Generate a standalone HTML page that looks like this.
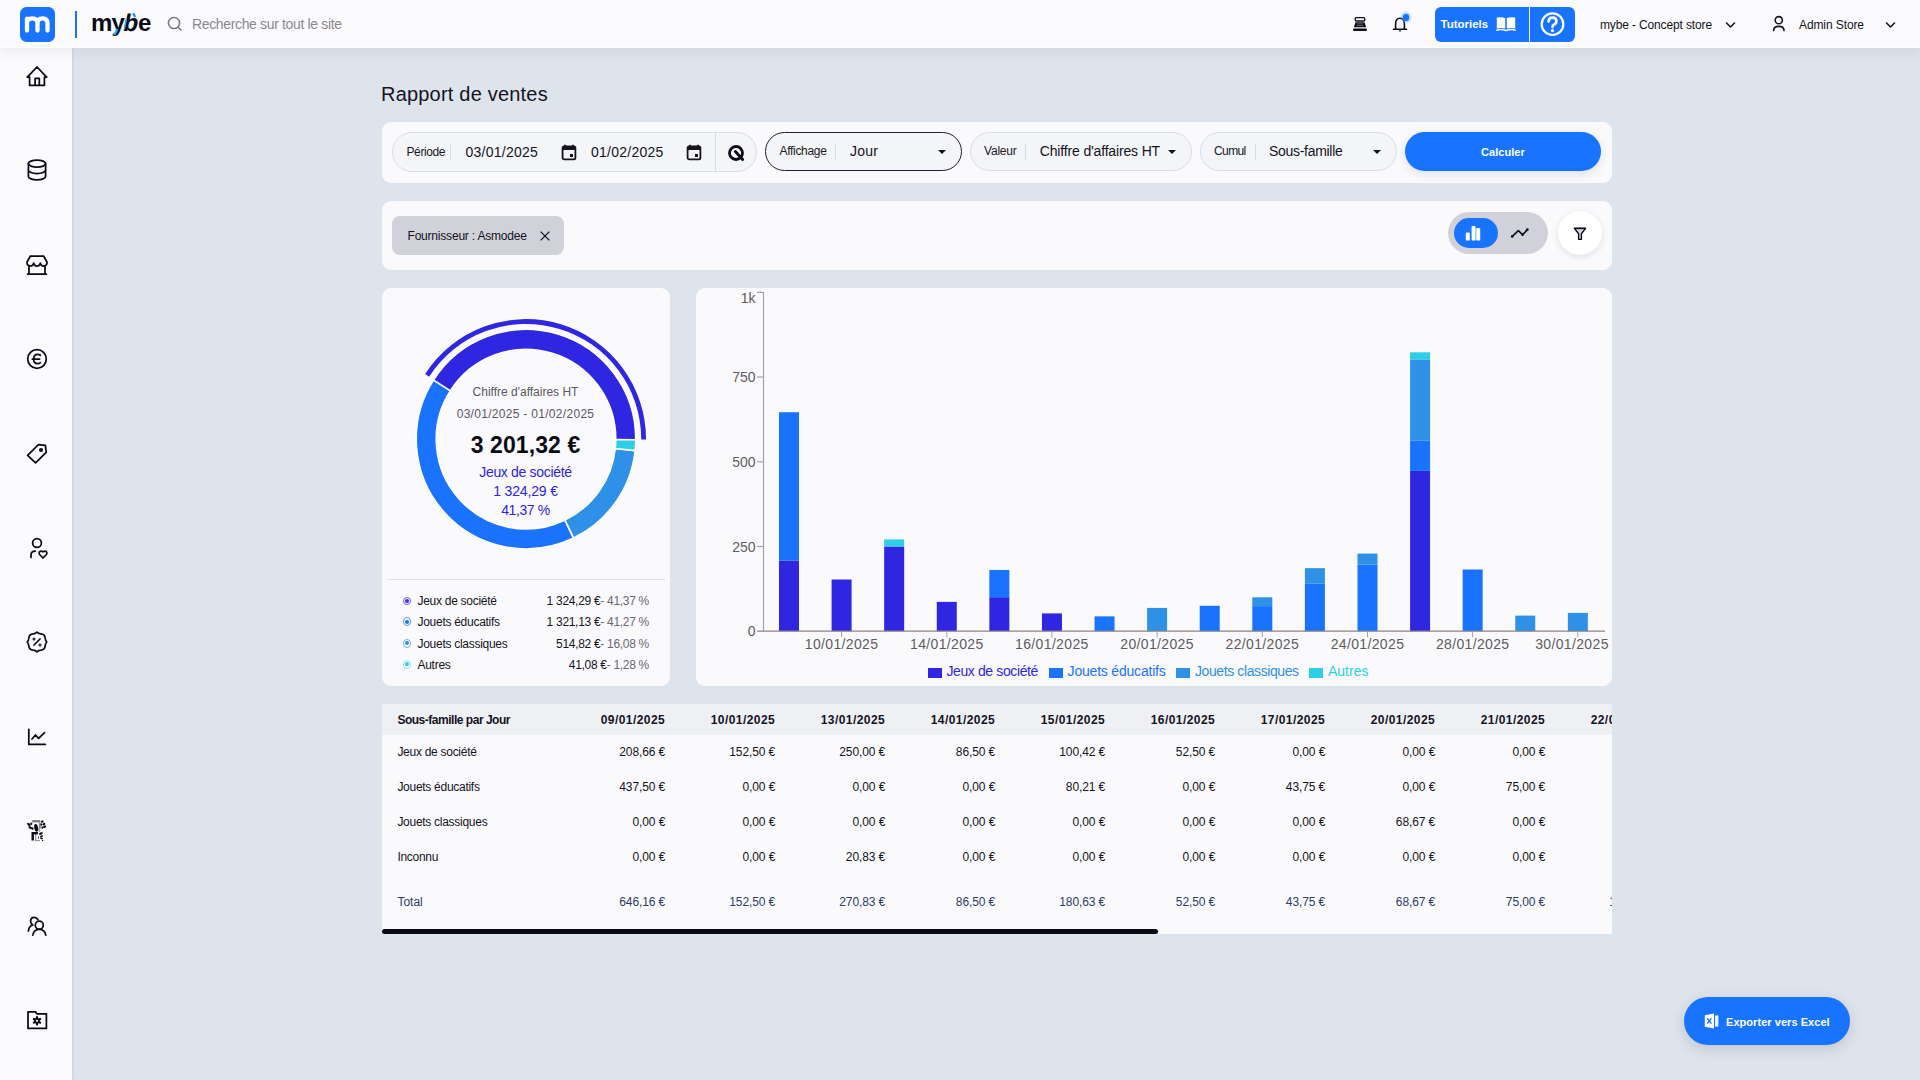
<!DOCTYPE html>
<html><head><meta charset="utf-8">
<style>
*{box-sizing:border-box;margin:0;padding:0}
html,body{width:1920px;height:1080px;overflow:hidden}
body{font-family:"Liberation Sans",sans-serif;background:#dee4eb;color:#15131f;position:relative;line-height:1}
.a{position:absolute}
.t{position:absolute;white-space:nowrap;line-height:1}
#hdr{position:absolute;left:0;top:0;width:1920px;height:48px;background:#fbfbfd;border-bottom:1px solid #fff;box-shadow:0 3px 12px rgba(20,30,50,.07);z-index:3}
#side{position:absolute;left:0;top:48px;width:72px;height:1032px;background:#fbfbfd;box-shadow:1px 0 2px rgba(30,40,60,.10);z-index:2}
.card{position:absolute;background:#fafafd;border-radius:9px}
svg{position:absolute;overflow:visible}
.ic path,.ic circle,.ic ellipse,.ic polyline,.ic rect{fill:none;stroke:#0c0a17;stroke-width:1.75;stroke-linecap:round;stroke-linejoin:round}
.pill{position:absolute;top:132px;height:40px;border:1px solid #d8dee6;border-radius:20px;background:#f3f5f8}
.plbl{font-size:12px;color:#1a1826;letter-spacing:-0.4px}
.pval{font-size:14px;color:#15131f}
.div{position:absolute;width:1px;background:#d6dbe2}
.caret{position:absolute;width:0;height:0;border-left:4.5px solid transparent;border-right:4.5px solid transparent;border-top:4.5px solid #15131f}
</style></head><body>
<div id="hdr">
  <!-- logo -->
  <div class="a" style="left:20px;top:7px;width:35px;height:35px;background:#1874ff;border-radius:6.5px"></div>
  <svg style="left:20px;top:7px" width="35" height="35" viewBox="0 0 35 35"><path d="M7 23.6 V11.6 M7 16.2 Q7 11.3 12.25 11.3 Q17.5 11.3 17.5 16.2 V23.6 M17.5 16.2 Q17.5 11.3 22.5 11.3 Q27.5 11.3 27.5 16.2 V23.6" fill="none" stroke="#fff" stroke-width="4.3" stroke-linecap="round"/></svg>
  <div class="a" style="left:75px;top:11px;width:1.5px;height:27px;background:#1874ff"></div>
  <div class="t" style="left:91px;top:10.5px;font-size:24px;font-weight:bold;letter-spacing:-0.8px;color:#0b0a18">my<span style="display:inline-block;transform:skewX(-12deg)">b</span>e</div>
  <svg style="left:91px;top:5px" width="62" height="35" viewBox="0 0 62 35"><path d="M23.2 30 L26.4 24" stroke="#29b8f0" stroke-width="2.2"/><path d="M35.4 13.6 L33.6 23.2" stroke="#2a9ff2" stroke-width="1.5"/><path d="M42.2 8.2 L44.2 12" stroke="#1f8bf5" stroke-width="2.2"/></svg>
  <svg class="ic" style="left:166px;top:15px" width="18" height="18" viewBox="0 0 18 18"><circle cx="8" cy="8" r="5.6" style="stroke:#7c7476;stroke-width:1.5"/><path d="M12.2 12.2 L15 15" style="stroke:#7c7476;stroke-width:1.5"/></svg>
  <div class="t" style="left:192px;top:16.9px;font-size:14px;color:#8b878f;letter-spacing:-0.35px">Recherche sur tout le site</div>

  <!-- cash register -->
  <svg style="left:1352px;top:16px" width="16" height="16" viewBox="0 0 16 16">
    <rect x="3.2" y="1.6" width="9.6" height="3.4" rx="1.6" fill="none" stroke="#0c0a17" stroke-width="1.4"/>
    <path d="M3.5 6.2 H12.5 L14.2 11.2 H1.8 Z" fill="#0c0a17"/>
    <rect x="4.8" y="7.6" width="6.4" height="0.6" fill="#9a8fa0"/><rect x="4.8" y="9.4" width="6.4" height="0.6" fill="#9a8fa0"/>
    <rect x="1.2" y="12.4" width="13.6" height="2.6" rx="0.8" fill="#0c0a17"/>
  </svg>
  <!-- bell -->
  <svg style="left:1392px;top:16px" width="18" height="18" viewBox="0 0 18 18">
    <path d="M3.6 13 V8 Q3.6 2.2 8 2.2 Q12.4 2.2 12.4 8 V13" fill="none" stroke="#0c0a17" stroke-width="1.6"/>
    <path d="M1.5 13.2 H14.5" stroke="#0c0a17" stroke-width="1.6" stroke-linecap="round"/>
    <path d="M6.6 14.6 H9.4 L8 16 Z" fill="#0c0a17"/>
  </svg>
  <div class="a" style="left:1402.6px;top:14.4px;width:6.8px;height:6.8px;border-radius:50%;background:#1a73ff;box-shadow:0 0 2px 1.5px rgba(80,160,255,.6)"></div>
  <!-- tutoriels -->
  <div class="a" style="left:1435px;top:7px;width:140px;height:35px;background:#1874ff;border-radius:6px"></div>
  <div class="a" style="left:1529px;top:7px;width:1.3px;height:35px;background:#f4f7ff"></div>
  <div class="t" style="left:1440.5px;top:19.2px;font-size:11.5px;font-weight:bold;color:#fff;letter-spacing:0">Tutoriels</div>
  <svg style="left:1495px;top:16px" width="22" height="16" viewBox="0 0 22 16">
    <path d="M1.8 1.6 Q6 0.6 10.2 2 V12.6 Q6 11.4 1.8 12.6 Z" fill="#fff"/>
    <path d="M11.8 2 Q16 0.6 20.2 1.6 V12.6 Q16 11.4 11.8 12.6 Z" fill="#fff"/>
    <path d="M1.2 14.4 Q6 12.4 11 14.6 Q16 12.4 20.8 14.4" fill="none" stroke="#fff" stroke-width="1.4"/>
  </svg>
  <svg style="left:1540px;top:12px" width="25" height="25" viewBox="0 0 25 25">
    <circle cx="12.5" cy="12.2" r="10.8" fill="none" stroke="#fff" stroke-width="2.2"/>
    <path d="M8.6 9.4 Q8.6 5.6 12.5 5.6 Q16.4 5.6 16.4 9.2 Q16.4 11.4 13.8 12.6 Q12.5 13.2 12.5 15" fill="none" stroke="#fff" stroke-width="2.6" stroke-linecap="round"/>
    <circle cx="12.5" cy="18.6" r="1.6" fill="#fff"/>
  </svg>
  <div class="t" style="left:1600px;top:18.6px;font-size:12px;color:#15131f;letter-spacing:-0.14px">mybe - Concept store</div>
  <svg style="left:1724px;top:20px" width="12" height="10" viewBox="0 0 12 10"><path d="M2.5 3 L6.5 7 L10.5 3" fill="none" stroke="#15131f" stroke-width="1.6" stroke-linecap="round" stroke-linejoin="round"/></svg>
  <svg style="left:1771px;top:15px" width="16" height="18" viewBox="0 0 16 18"><circle cx="7.8" cy="5.2" r="3.6" fill="none" stroke="#15131f" stroke-width="1.6"/><path d="M2.6 15.6 Q2.6 11.4 7.8 11.4 Q13 11.4 13 15.6" fill="none" stroke="#15131f" stroke-width="1.6" stroke-linecap="round"/></svg>
  <div class="t" style="left:1799px;top:18.6px;font-size:12px;color:#15131f;letter-spacing:-0.1px">Admin Store</div>
  <svg style="left:1884px;top:20px" width="12" height="10" viewBox="0 0 12 10"><path d="M2.5 3 L6.5 7 L10.5 3" fill="none" stroke="#15131f" stroke-width="1.6" stroke-linecap="round" stroke-linejoin="round"/></svg>
</div>

<div id="side">
  <!-- home -->
  <svg class="ic" style="left:17px;top:8px" width="40" height="40" viewBox="0 0 40 40"><path d="M12.6 29.3 V21.2 H10.3 L20 11 L29.7 21.2 H27.4 V29.3 Z M18.1 29.3 V22.4 H22.3 V29.3"/></svg>
  <!-- database -->
  <svg class="ic" style="left:17px;top:102px" width="40" height="40" viewBox="0 0 40 40"><ellipse cx="20" cy="13.6" rx="8.6" ry="3.5"/><path d="M11.4 13.6 V26.4 A8.6 3.5 0 0 0 28.6 26.4 V13.6 M11.4 20 A8.6 3.5 0 0 0 28.6 20"/></svg>
  <!-- store -->
  <svg class="ic" style="left:17px;top:197px" width="40" height="40" viewBox="0 0 40 40"><path d="M13.4 11 H26.6 L30 17 Q30.4 20.8 26.5 21 Q24 21 23.3 18.2 Q22.3 21.2 20 21.2 Q17.7 21.2 16.7 18.2 Q16 21 13.5 21 Q9.6 20.8 10 17 Z M12 21.3 V29 M28 21.3 V29 M10.6 29 H29.4"/></svg>
  <!-- euro -->
  <svg class="ic" style="left:17px;top:291px" width="40" height="40" viewBox="0 0 40 40"><circle cx="20" cy="20" r="9.3"/><path d="M23.4 16.3 Q22 15.3 20.6 15.3 Q16.6 15.3 16.6 20 Q16.6 24.7 20.6 24.7 Q22 24.7 23.4 23.6 M15.3 20 H22.6"/></svg>
  <!-- tag -->
  <svg class="ic" style="left:17px;top:385px" width="40" height="40" viewBox="0 0 40 40"><path d="M10.6 22.3 L21.4 11.7 L28.4 12.4 L29.2 19.3 L18.6 29.9 Z"/><circle cx="24" cy="17" r="1.2"/></svg>
  <!-- person heart -->
  <svg class="ic" style="left:17px;top:480px" width="40" height="40" viewBox="0 0 40 40"><circle cx="20" cy="14.9" r="4.4"/><path d="M14 29.4 V27 Q14 23 18.3 23 M26 30 L22.6 26.5 Q21.6 25.4 22.4 24 Q23.6 22.3 26 23.8 Q28.4 22.3 29.6 24 Q30.4 25.4 29.4 26.5 Z"/></svg>
  <!-- percent badge -->
  <svg class="ic" style="left:17px;top:574px" width="40" height="40" viewBox="0 0 40 40"><path d="M20 10.2 Q21.6 11.8 23.8 11.9 Q27.9 12.2 28.2 16.3 Q28.3 18.4 29.8 20 Q28.3 21.6 28.2 23.7 Q27.9 27.8 23.8 28.1 Q21.6 28.2 20 29.8 Q18.4 28.2 16.2 28.1 Q12.1 27.8 11.8 23.7 Q11.7 21.6 10.2 20 Q11.7 18.4 11.8 16.3 Q12.1 12.2 16.2 11.9 Q18.4 11.8 20 10.2 Z M17 23 L23 17"/><circle cx="17" cy="17" r="0.5" style="stroke-width:2"/><circle cx="23" cy="23" r="0.5" style="stroke-width:2"/></svg>
  <!-- chart -->
  <svg class="ic" style="left:17px;top:669px" width="40" height="40" viewBox="0 0 40 40"><path d="M11.8 12.3 V27.4 H28.4 M15 22 L18.5 18 L21.6 21.4 L27.5 15.6"/></svg>
  <!-- money hand -->
  <svg style="left:25px;top:770px" width="24" height="26" viewBox="25 818 24 26"><g fill="#0c0a17">
    <rect x="32.2" y="820.1" width="7.8" height="2.2" fill="#7e7486"/>
    <rect x="38.8" y="822" width="1.3" height="10" fill="#a89fb0"/>
    <ellipse cx="28.9" cy="824.4" rx="2.1" ry="1.2" transform="rotate(35 28.9 824.4)"/>
    <ellipse cx="31.3" cy="823.8" rx="1" ry="1.3"/>
    <ellipse cx="30.3" cy="827.6" rx="2.1" ry="1.2" transform="rotate(35 30.3 827.6)"/>
    <ellipse cx="32.6" cy="828.6" rx="1" ry="1.3"/>
    <ellipse cx="36.2" cy="827.8" rx="1.9" ry="3.9" transform="rotate(-12 36.2 827.8)"/>
    <ellipse cx="42.2" cy="821.7" rx="1.6" ry="1.1"/>
    <ellipse cx="41.2" cy="824.5" rx="1" ry="1.3"/>
    <ellipse cx="43.9" cy="824.1" rx="1.6" ry="1.15" transform="rotate(-35 43.9 824.1)"/>
    <ellipse cx="44.6" cy="826.7" rx="1.6" ry="1.15" transform="rotate(-35 44.6 826.7)"/>
    <ellipse cx="42.4" cy="827.6" rx="1.1" ry="1.2"/>
    <rect x="39.6" y="823.6" width="0.9" height="5" fill="#6a5f78"/>
    <path d="M32.7 840.4 V833.3 H37.9" fill="none" stroke="#0c0a17" stroke-width="2.4"/>
    <ellipse cx="40.9" cy="833.5" rx="2.1" ry="1.15" transform="rotate(-30 40.9 833.5)"/>
    <ellipse cx="41.5" cy="836.3" rx="1.7" ry="0.9" transform="rotate(-20 41.5 836.3)"/>
    <ellipse cx="41.6" cy="838.5" rx="1.5" ry="0.8"/>
    <circle cx="42.6" cy="840.4" r="0.7"/>
    <rect x="35" y="835" width="1.2" height="6" fill="#988fa2"/><rect x="35" y="839.9" width="5" height="1.2" fill="#988fa2"/>
    <rect x="38" y="836" width="1" height="3" fill="#6a5f78"/>
  </g></svg>
  <!-- users -->
  <svg class="ic" style="left:17px;top:858px" width="40" height="40" viewBox="0 0 40 40"><path d="M21 13.6 Q19.8 11.3 17.4 11.3 Q13.6 11.3 13.6 15.2 Q13.6 17.4 15.8 19 Q11.6 20.4 11.4 25"/><circle cx="22.3" cy="19.2" r="4"/><path d="M15.8 29.2 Q16.8 23.4 22.3 23.4 Q27.8 23.4 28.8 29.2"/></svg>
  <!-- folder gear -->
  <svg class="ic" style="left:17px;top:952px" width="40" height="40" viewBox="0 0 40 40"><path d="M11 11.8 H18.4 L19.8 13.8 H29.4 V28.4 H11 Z"/><circle cx="20" cy="20.8" r="2" style="stroke-width:1.8"/><path d="M20 17.2 V18.2 M20 23.4 V24.4 M16.9 19 L17.8 19.5 M22.2 22.1 L23.1 22.6 M16.9 22.6 L17.8 22.1 M22.2 19.5 L23.1 19" style="stroke-width:2.2"/></svg>
</div>

<div class="t" style="left:381px;top:84.3px;font-size:20px;color:#15131f;letter-spacing:0.2px">Rapport de ventes</div>

<!-- FILTER CARD -->
<div class="card" style="left:382px;top:122px;width:1230px;height:61px"></div>
<!-- periode -->
<div class="pill" style="left:392px;width:365px"></div>
<div class="t plbl" style="left:406.5px;top:145.8px">Période</div>
<div class="div" style="left:450px;top:144px;height:16px"></div>
<div class="t pval" style="left:465.5px;top:145px;letter-spacing:0.25px">03/01/2025</div>
<svg style="left:561px;top:144px" width="16" height="17" viewBox="0 0 16 17"><path d="M4 0.8 V3 M12 0.8 V3" stroke="#15131f" stroke-width="1.8"/><rect x="1.6" y="2.4" width="12.8" height="13" rx="1.6" fill="none" stroke="#15131f" stroke-width="1.8"/><rect x="1.6" y="2.4" width="12.8" height="3.6" fill="#15131f"/><rect x="9" y="10" width="3" height="3" fill="#15131f"/></svg>
<div class="t pval" style="left:591px;top:145px;letter-spacing:0.25px">01/02/2025</div>
<svg style="left:686px;top:144px" width="16" height="17" viewBox="0 0 16 17"><path d="M4 0.8 V3 M12 0.8 V3" stroke="#15131f" stroke-width="1.8"/><rect x="1.6" y="2.4" width="12.8" height="13" rx="1.6" fill="none" stroke="#15131f" stroke-width="1.8"/><rect x="1.6" y="2.4" width="12.8" height="3.6" fill="#15131f"/><rect x="9" y="10" width="3" height="3" fill="#15131f"/></svg>
<div class="div" style="left:715px;top:133px;height:38px"></div>
<svg style="left:727px;top:144px" width="18" height="18" viewBox="0 0 18 18"><circle cx="9" cy="9" r="6.5" fill="none" stroke="#0c0a17" stroke-width="2.8"/><path d="M8.4 7.6 L15.6 15.4" stroke="#0c0a17" stroke-width="3" stroke-linecap="round"/></svg>
<!-- affichage -->
<div class="pill" style="left:765px;width:197px;height:39px;border:1.5px solid #231d38"></div>
<div class="t plbl" style="left:779.5px;top:145.2px;letter-spacing:-0.3px">Affichage</div>
<div class="div" style="left:835px;top:144px;height:16px"></div>
<div class="t pval" style="left:850px;top:143.9px;letter-spacing:0.2px">Jour</div>
<div class="caret" style="left:937.5px;top:150px"></div>
<!-- valeur -->
<div class="pill" style="left:970px;width:222px;height:39px"></div>
<div class="t plbl" style="left:984px;top:145.2px;letter-spacing:-0.2px">Valeur</div>
<div class="div" style="left:1025px;top:144px;height:16px"></div>
<div class="t pval" style="left:1039.8px;top:143.9px;letter-spacing:-0.16px">Chiffre d'affaires HT</div>
<div class="caret" style="left:1167.5px;top:150px"></div>
<!-- cumul -->
<div class="pill" style="left:1200px;width:197px;height:39px"></div>
<div class="t plbl" style="left:1214px;top:145.2px;letter-spacing:-0.6px">Cumul</div>
<div class="div" style="left:1255px;top:144px;height:16px"></div>
<div class="t pval" style="left:1269px;top:143.9px;letter-spacing:-0.3px">Sous-famille</div>
<div class="caret" style="left:1372.5px;top:150px"></div>
<!-- calculer -->
<div class="a" style="left:1405px;top:132px;width:196px;height:39px;border-radius:20px;background:#1874ff;box-shadow:0 3px 10px rgba(20,30,80,.12)"></div>
<div class="t" style="left:1481px;top:146.5px;font-size:11px;font-weight:bold;color:#fff;letter-spacing:0.05px">Calculer</div>

<!-- CHIP CARD -->
<div class="card" style="left:382px;top:201px;width:1230px;height:69px"></div>
<div class="a" style="left:392px;top:216px;width:172px;height:39px;border-radius:8px;background:#d1d1d9"></div>
<div class="t" style="left:407.5px;top:230.2px;font-size:12px;color:#15131f;letter-spacing:-0.2px">Fournisseur : Asmodee</div>
<svg style="left:539px;top:230px" width="12" height="12" viewBox="0 0 12 12"><path d="M1.6 1.6 L10.4 10.4 M10.4 1.6 L1.6 10.4" stroke="#15131f" stroke-width="1.3"/></svg>
<div class="a" style="left:1448px;top:212px;width:100px;height:42px;border-radius:21px;background:#d1d1d9"></div>
<div class="a" style="left:1454px;top:218px;width:44px;height:30px;border-radius:15px;background:#1874ff"></div>
<svg style="left:1465px;top:225px" width="17" height="16" viewBox="0 0 17 16"><rect x="0.8" y="7.4" width="4" height="8.2" rx="1.2" fill="#fff"/><rect x="6.6" y="1" width="4" height="14.6" rx="1.2" fill="#fff"/><rect x="11.2" y="3" width="4" height="12.6" rx="1.2" fill="#fff"/></svg>
<svg style="left:1510px;top:227px" width="20" height="12" viewBox="0 0 20 12"><path d="M2.2 9.4 L8.4 3.6 L12.6 7.8 L17.4 2.6" fill="none" stroke="#0c0a17" stroke-width="1.6" stroke-linejoin="round"/><circle cx="2.2" cy="9.4" r="1.3" fill="#0c0a17"/><circle cx="12.6" cy="7.8" r="1.3" fill="#0c0a17"/><circle cx="17.4" cy="2.6" r="1.3" fill="#0c0a17"/></svg>
<div class="a" style="left:1558px;top:211px;width:44px;height:44px;border-radius:50%;background:#fff;box-shadow:0 2px 6px rgba(40,30,50,.12)"></div>
<svg style="left:1573px;top:227px" width="14" height="14" viewBox="0 0 14 14"><path d="M1.4 1.4 H12.6 L8.4 6.8 V12.4 H5.6 V6.8 Z" fill="#d9d9dd" stroke="#0c0a17" stroke-width="1.4" stroke-linejoin="round"/><path d="M1.4 1.4 H12.6" stroke="#0c0a17" stroke-width="1.6"/></svg>

<!-- DONUT CARD -->
<div class="card" style="left:382px;top:288px;width:288px;height:397.5px"></div>
<svg id="donut" style="left:381px;top:288px" width="289" height="290" viewBox="381 288 289 290"><path d="M635.80 439.77 A109.8 109.8 0 0 0 433.40 380.10 L450.35 390.90 A89.7 89.7 0 0 1 615.70 439.65 Z" fill="#2e26e0" stroke="#fff" stroke-width="1.7"/><path d="M433.40 380.10 A109.8 109.8 0 0 0 573.62 538.04 L564.90 519.93 A89.7 89.7 0 0 1 450.35 390.90 Z" fill="#1a73ff" stroke="#fff" stroke-width="1.7"/><path d="M573.62 538.04 A109.8 109.8 0 0 0 635.20 450.58 L615.21 448.48 A89.7 89.7 0 0 1 564.90 519.93 Z" fill="#2e90e6" stroke="#fff" stroke-width="1.7"/><path d="M635.20 450.58 A109.8 109.8 0 0 0 635.80 439.77 L615.70 439.65 A89.7 89.7 0 0 1 615.21 448.48 Z" fill="#2ccfe6" stroke="#fff" stroke-width="1.7"/><path d="M646.00 439.41 A120 120 0 0 0 425.13 374.10 L429.17 376.70 A115.2 115.2 0 0 1 641.20 439.40 Z" fill="#2e26e0"/></svg>
<div class="t" style="left:381px;width:289px;text-align:center;top:385.9px;font-size:12px;color:#5b5662;padding-left:0px">Chiffre d'affaires HT</div>
<div class="t" style="left:381px;width:289px;text-align:center;top:408.1px;font-size:12px;color:#5b5662;letter-spacing:0.3px">03/01/2025 - 01/02/2025</div>
<div class="t" style="left:381px;width:289px;text-align:center;top:433.5px;font-size:23px;font-weight:bold;color:#0b0a14;letter-spacing:0.1px">3 201,32 €</div>
<div class="t" style="left:381px;width:289px;text-align:center;top:465.4px;font-size:14px;color:#2c24e2;letter-spacing:-0.32px">Jeux de société</div>
<div class="t" style="left:381px;width:289px;text-align:center;top:484.3px;font-size:14px;color:#2c24e2;letter-spacing:-0.15px">1 324,29 €</div>
<div class="t" style="left:381px;width:289px;text-align:center;top:503.2px;font-size:14px;color:#2c24e2;letter-spacing:-0.4px">41,37 %</div>
<div class="a" style="left:387px;top:579px;width:278px;height:1px;background:#e1e5eb"></div>
<div id="legend"><div class="a" style="left:402.6px;top:596.60px;width:8.6px;height:8.6px;border-radius:50%;border:1.3px solid #6a5ef0;background:#f9f9fc"></div><div class="a" style="left:404.9px;top:598.90px;width:4px;height:4px;border-radius:50%;background:#3a2fe0"></div><div class="t" style="left:417.5px;top:595.04px;font-size:12px;color:#15131f;letter-spacing:-0.28px">Jeux de société</div><div class="t" style="right:1271px;top:595.04px;font-size:12px;color:#15131f;letter-spacing:-0.3px">1 324,29 €<span style="color:#6b6670">- 41,37 %</span></div><div class="a" style="left:402.6px;top:617.40px;width:8.6px;height:8.6px;border-radius:50%;border:1.3px solid #5c9cff;background:#f9f9fc"></div><div class="a" style="left:404.9px;top:619.70px;width:4px;height:4px;border-radius:50%;background:#1a73ff"></div><div class="t" style="left:417.5px;top:615.84px;font-size:12px;color:#15131f;letter-spacing:-0.28px">Jouets éducatifs</div><div class="t" style="right:1271px;top:615.84px;font-size:12px;color:#15131f;letter-spacing:-0.3px">1 321,13 €<span style="color:#6b6670">- 41,27 %</span></div><div class="a" style="left:402.6px;top:639.10px;width:8.6px;height:8.6px;border-radius:50%;border:1.3px solid #74b0ee;background:#f9f9fc"></div><div class="a" style="left:404.9px;top:641.40px;width:4px;height:4px;border-radius:50%;background:#2e90e6"></div><div class="t" style="left:417.5px;top:637.54px;font-size:12px;color:#15131f;letter-spacing:-0.28px">Jouets classiques</div><div class="t" style="right:1271px;top:637.54px;font-size:12px;color:#15131f;letter-spacing:-0.3px">514,82 €<span style="color:#6b6670">- 16,08 %</span></div><div class="a" style="left:402.6px;top:660.15px;width:8.6px;height:8.6px;border-radius:50%;border:1.3px solid #8fe2f0;background:#f9f9fc"></div><div class="a" style="left:404.9px;top:662.45px;width:4px;height:4px;border-radius:50%;background:#2ccfe6"></div><div class="t" style="left:417.5px;top:658.59px;font-size:12px;color:#15131f;letter-spacing:-0.28px">Autres</div><div class="t" style="right:1271px;top:658.59px;font-size:12px;color:#15131f;letter-spacing:-0.3px">41,08 €<span style="color:#6b6670">- 1,28 %</span></div></div>

<!-- BAR CHART CARD -->
<div class="card" style="left:696px;top:288px;width:916px;height:397.5px"></div>
<svg id="bars" style="left:0;top:0" width="1920" height="1080" viewBox="0 0 1920 1080"><rect x="779.00" y="560.49" width="20" height="70.71" fill="#2e26e0"/><rect x="779.00" y="412.22" width="20" height="148.27" fill="#1a73ff"/><rect x="831.59" y="579.52" width="20" height="51.68" fill="#2e26e0"/><rect x="884.18" y="546.48" width="20" height="84.73" fill="#2e26e0"/><rect x="884.18" y="539.42" width="20" height="7.06" fill="#2ccfe6"/><rect x="936.77" y="601.89" width="20" height="29.31" fill="#2e26e0"/><rect x="989.36" y="597.17" width="20" height="34.03" fill="#2e26e0"/><rect x="989.36" y="569.98" width="20" height="27.18" fill="#1a73ff"/><rect x="1041.95" y="613.41" width="20" height="17.79" fill="#2e26e0"/><rect x="1094.54" y="616.37" width="20" height="14.83" fill="#1a73ff"/><rect x="1147.12" y="607.93" width="20" height="23.27" fill="#2e90e6"/><rect x="1199.72" y="605.78" width="20" height="25.42" fill="#1a73ff"/><rect x="1252.31" y="606.12" width="20" height="25.08" fill="#1a73ff"/><rect x="1252.31" y="597.31" width="20" height="8.81" fill="#2e90e6"/><rect x="1304.89" y="583.75" width="20" height="47.45" fill="#1a73ff"/><rect x="1304.89" y="568.16" width="20" height="15.59" fill="#2e90e6"/><rect x="1357.49" y="564.44" width="20" height="66.76" fill="#1a73ff"/><rect x="1357.49" y="553.59" width="20" height="10.84" fill="#2e90e6"/><rect x="1410.08" y="470.90" width="20" height="160.30" fill="#2e26e0"/><rect x="1410.08" y="440.40" width="20" height="30.50" fill="#1a73ff"/><rect x="1410.08" y="359.40" width="20" height="81.00" fill="#2e90e6"/><rect x="1410.08" y="352.29" width="20" height="7.12" fill="#2ccfe6"/><rect x="1462.66" y="569.52" width="20" height="61.68" fill="#1a73ff"/><rect x="1515.26" y="615.61" width="20" height="15.59" fill="#2e90e6"/><rect x="1567.85" y="612.90" width="20" height="18.30" fill="#2e90e6"/><path d="M757 292.3 H763.5 V631.2" fill="none" stroke="#a3a3a8" stroke-width="1.2"/><path d="M757 546.5 H763" stroke="#a3a3a8" stroke-width="1.2"/><path d="M757 461.8 H763" stroke="#a3a3a8" stroke-width="1.2"/><path d="M757 377.0 H763" stroke="#a3a3a8" stroke-width="1.2"/><path d="M757 631.2 H1605" stroke="#8e8282" stroke-width="1.3"/><path d="M841.6 631.2 V637.2" stroke="#a9a1a1" stroke-width="1"/><path d="M946.8 631.2 V637.2" stroke="#a9a1a1" stroke-width="1"/><path d="M1051.9 631.2 V637.2" stroke="#a9a1a1" stroke-width="1"/><path d="M1157.1 631.2 V637.2" stroke="#a9a1a1" stroke-width="1"/><path d="M1262.3 631.2 V637.2" stroke="#a9a1a1" stroke-width="1"/><path d="M1367.5 631.2 V637.2" stroke="#a9a1a1" stroke-width="1"/><path d="M1472.7 631.2 V637.2" stroke="#a9a1a1" stroke-width="1"/><path d="M1577.8 631.2 V637.2" stroke="#a9a1a1" stroke-width="1"/></svg>
<div id="chartlbl"><div class="t" style="right:1164.5px;top:291.15px;font-size:14px;color:#5f5a5e">1k</div><div class="t" style="right:1164.5px;top:370.15px;font-size:14px;color:#5f5a5e">750</div><div class="t" style="right:1164.5px;top:455.15px;font-size:14px;color:#5f5a5e">500</div><div class="t" style="right:1164.5px;top:539.55px;font-size:14px;color:#5f5a5e">250</div><div class="t" style="right:1164.5px;top:623.75px;font-size:14px;color:#5f5a5e">0</div><div class="t" style="left:791.6px;width:100px;text-align:center;top:637.05px;font-size:14px;color:#5f5a5e;letter-spacing:0.35px">10/01/2025</div><div class="t" style="left:896.8px;width:100px;text-align:center;top:637.05px;font-size:14px;color:#5f5a5e;letter-spacing:0.35px">14/01/2025</div><div class="t" style="left:1001.9px;width:100px;text-align:center;top:637.05px;font-size:14px;color:#5f5a5e;letter-spacing:0.35px">16/01/2025</div><div class="t" style="left:1107.1px;width:100px;text-align:center;top:637.05px;font-size:14px;color:#5f5a5e;letter-spacing:0.35px">20/01/2025</div><div class="t" style="left:1212.3px;width:100px;text-align:center;top:637.05px;font-size:14px;color:#5f5a5e;letter-spacing:0.35px">22/01/2025</div><div class="t" style="left:1317.5px;width:100px;text-align:center;top:637.05px;font-size:14px;color:#5f5a5e;letter-spacing:0.35px">24/01/2025</div><div class="t" style="left:1422.7px;width:100px;text-align:center;top:637.05px;font-size:14px;color:#5f5a5e;letter-spacing:0.35px">28/01/2025</div><div class="t" style="left:1522.0px;width:100px;text-align:center;top:637.05px;font-size:14px;color:#5f5a5e;letter-spacing:0.35px">30/01/2025</div><div class="a" style="left:928px;top:668px;width:14px;height:10px;background:#2e26e0"></div><div class="t" style="left:946.4px;top:664.15px;font-size:14px;color:#2e26e0;letter-spacing:-0.38px">Jeux de société</div><div class="a" style="left:1049.3px;top:668px;width:14px;height:10px;background:#1a73ff"></div><div class="t" style="left:1067.6px;top:664.15px;font-size:14px;color:#1a73ff;letter-spacing:-0.2px">Jouets éducatifs</div><div class="a" style="left:1176px;top:668px;width:14px;height:10px;background:#2e90e6"></div><div class="t" style="left:1195px;top:664.15px;font-size:14px;color:#2e90e6;letter-spacing:-0.4px">Jouets classiques</div><div class="a" style="left:1309px;top:668px;width:14px;height:10px;background:#2ccfe6"></div><div class="t" style="left:1328px;top:664.15px;font-size:14px;color:#2ccfe6;letter-spacing:0.0px">Autres</div></div>

<!-- TABLE -->
<div class="a" style="left:382px;top:704px;width:1230px;height:230px;background:#fafafd;overflow:hidden" id="tbl"><div class="a" style="left:0;top:0;width:1230px;height:31px;background:#eef0f3"></div><div class="t" style="left:15.399999999999977px;top:9.74px;font-size:12px;font-weight:bold;color:#15131f;letter-spacing:-0.48px">Sous-famille par Jour</div><div class="t" style="right:946.8px;top:9.74px;font-size:12px;font-weight:bold;color:#15131f;letter-spacing:0.45px">09/01/2025</div><div class="t" style="right:836.8px;top:9.74px;font-size:12px;font-weight:bold;color:#15131f;letter-spacing:0.45px">10/01/2025</div><div class="t" style="right:726.8px;top:9.74px;font-size:12px;font-weight:bold;color:#15131f;letter-spacing:0.45px">13/01/2025</div><div class="t" style="right:616.8px;top:9.74px;font-size:12px;font-weight:bold;color:#15131f;letter-spacing:0.45px">14/01/2025</div><div class="t" style="right:506.8px;top:9.74px;font-size:12px;font-weight:bold;color:#15131f;letter-spacing:0.45px">15/01/2025</div><div class="t" style="right:396.8px;top:9.74px;font-size:12px;font-weight:bold;color:#15131f;letter-spacing:0.45px">16/01/2025</div><div class="t" style="right:286.8px;top:9.74px;font-size:12px;font-weight:bold;color:#15131f;letter-spacing:0.45px">17/01/2025</div><div class="t" style="right:176.8px;top:9.74px;font-size:12px;font-weight:bold;color:#15131f;letter-spacing:0.45px">20/01/2025</div><div class="t" style="right:66.8px;top:9.74px;font-size:12px;font-weight:bold;color:#15131f;letter-spacing:0.45px">21/01/2025</div><div class="t" style="right:-43.2px;top:9.74px;font-size:12px;font-weight:bold;color:#15131f;letter-spacing:0.45px">22/01/2025</div><div class="t" style="left:15.399999999999977px;top:42.14px;font-size:12px;color:#15131f;letter-spacing:-0.28px">Jeux de société</div><div class="t" style="right:946.8px;top:42.14px;font-size:12px;color:#15131f;letter-spacing:-0.1px">208,66 €</div><div class="t" style="right:836.8px;top:42.14px;font-size:12px;color:#15131f;letter-spacing:-0.1px">152,50 €</div><div class="t" style="right:726.8px;top:42.14px;font-size:12px;color:#15131f;letter-spacing:-0.1px">250,00 €</div><div class="t" style="right:616.8px;top:42.14px;font-size:12px;color:#15131f;letter-spacing:-0.1px">86,50 €</div><div class="t" style="right:506.8px;top:42.14px;font-size:12px;color:#15131f;letter-spacing:-0.1px">100,42 €</div><div class="t" style="right:396.8px;top:42.14px;font-size:12px;color:#15131f;letter-spacing:-0.1px">52,50 €</div><div class="t" style="right:286.8px;top:42.14px;font-size:12px;color:#15131f;letter-spacing:-0.1px">0,00 €</div><div class="t" style="right:176.8px;top:42.14px;font-size:12px;color:#15131f;letter-spacing:-0.1px">0,00 €</div><div class="t" style="right:66.8px;top:42.14px;font-size:12px;color:#15131f;letter-spacing:-0.1px">0,00 €</div><div class="t" style="right:-43.2px;top:42.14px;font-size:12px;color:#15131f;letter-spacing:-0.1px">0,00 €</div><div class="t" style="left:15.399999999999977px;top:77.34px;font-size:12px;color:#15131f;letter-spacing:-0.28px">Jouets éducatifs</div><div class="t" style="right:946.8px;top:77.34px;font-size:12px;color:#15131f;letter-spacing:-0.1px">437,50 €</div><div class="t" style="right:836.8px;top:77.34px;font-size:12px;color:#15131f;letter-spacing:-0.1px">0,00 €</div><div class="t" style="right:726.8px;top:77.34px;font-size:12px;color:#15131f;letter-spacing:-0.1px">0,00 €</div><div class="t" style="right:616.8px;top:77.34px;font-size:12px;color:#15131f;letter-spacing:-0.1px">0,00 €</div><div class="t" style="right:506.8px;top:77.34px;font-size:12px;color:#15131f;letter-spacing:-0.1px">80,21 €</div><div class="t" style="right:396.8px;top:77.34px;font-size:12px;color:#15131f;letter-spacing:-0.1px">0,00 €</div><div class="t" style="right:286.8px;top:77.34px;font-size:12px;color:#15131f;letter-spacing:-0.1px">43,75 €</div><div class="t" style="right:176.8px;top:77.34px;font-size:12px;color:#15131f;letter-spacing:-0.1px">0,00 €</div><div class="t" style="right:66.8px;top:77.34px;font-size:12px;color:#15131f;letter-spacing:-0.1px">75,00 €</div><div class="t" style="right:-43.2px;top:77.34px;font-size:12px;color:#15131f;letter-spacing:-0.1px">75,00 €</div><div class="t" style="left:15.399999999999977px;top:112.24px;font-size:12px;color:#15131f;letter-spacing:-0.28px">Jouets classiques</div><div class="t" style="right:946.8px;top:112.24px;font-size:12px;color:#15131f;letter-spacing:-0.1px">0,00 €</div><div class="t" style="right:836.8px;top:112.24px;font-size:12px;color:#15131f;letter-spacing:-0.1px">0,00 €</div><div class="t" style="right:726.8px;top:112.24px;font-size:12px;color:#15131f;letter-spacing:-0.1px">0,00 €</div><div class="t" style="right:616.8px;top:112.24px;font-size:12px;color:#15131f;letter-spacing:-0.1px">0,00 €</div><div class="t" style="right:506.8px;top:112.24px;font-size:12px;color:#15131f;letter-spacing:-0.1px">0,00 €</div><div class="t" style="right:396.8px;top:112.24px;font-size:12px;color:#15131f;letter-spacing:-0.1px">0,00 €</div><div class="t" style="right:286.8px;top:112.24px;font-size:12px;color:#15131f;letter-spacing:-0.1px">0,00 €</div><div class="t" style="right:176.8px;top:112.24px;font-size:12px;color:#15131f;letter-spacing:-0.1px">68,67 €</div><div class="t" style="right:66.8px;top:112.24px;font-size:12px;color:#15131f;letter-spacing:-0.1px">0,00 €</div><div class="t" style="right:-43.2px;top:112.24px;font-size:12px;color:#15131f;letter-spacing:-0.1px">25,00 €</div><div class="t" style="left:15.399999999999977px;top:147.24px;font-size:12px;color:#15131f;letter-spacing:-0.28px">Inconnu</div><div class="t" style="right:946.8px;top:147.24px;font-size:12px;color:#15131f;letter-spacing:-0.1px">0,00 €</div><div class="t" style="right:836.8px;top:147.24px;font-size:12px;color:#15131f;letter-spacing:-0.1px">0,00 €</div><div class="t" style="right:726.8px;top:147.24px;font-size:12px;color:#15131f;letter-spacing:-0.1px">20,83 €</div><div class="t" style="right:616.8px;top:147.24px;font-size:12px;color:#15131f;letter-spacing:-0.1px">0,00 €</div><div class="t" style="right:506.8px;top:147.24px;font-size:12px;color:#15131f;letter-spacing:-0.1px">0,00 €</div><div class="t" style="right:396.8px;top:147.24px;font-size:12px;color:#15131f;letter-spacing:-0.1px">0,00 €</div><div class="t" style="right:286.8px;top:147.24px;font-size:12px;color:#15131f;letter-spacing:-0.1px">0,00 €</div><div class="t" style="right:176.8px;top:147.24px;font-size:12px;color:#15131f;letter-spacing:-0.1px">0,00 €</div><div class="t" style="right:66.8px;top:147.24px;font-size:12px;color:#15131f;letter-spacing:-0.1px">0,00 €</div><div class="t" style="right:-43.2px;top:147.24px;font-size:12px;color:#15131f;letter-spacing:-0.1px">0,00 €</div><div class="t" style="left:15.399999999999977px;top:192.14px;font-size:12px;color:#2c3a6e">Total</div><div class="t" style="right:946.8px;top:192.14px;font-size:12px;color:#2c3a6e;letter-spacing:-0.1px">646,16 €</div><div class="t" style="right:836.8px;top:192.14px;font-size:12px;color:#2c3a6e;letter-spacing:-0.1px">152,50 €</div><div class="t" style="right:726.8px;top:192.14px;font-size:12px;color:#2c3a6e;letter-spacing:-0.1px">270,83 €</div><div class="t" style="right:616.8px;top:192.14px;font-size:12px;color:#2c3a6e;letter-spacing:-0.1px">86,50 €</div><div class="t" style="right:506.8px;top:192.14px;font-size:12px;color:#2c3a6e;letter-spacing:-0.1px">180,63 €</div><div class="t" style="right:396.8px;top:192.14px;font-size:12px;color:#2c3a6e;letter-spacing:-0.1px">52,50 €</div><div class="t" style="right:286.8px;top:192.14px;font-size:12px;color:#2c3a6e;letter-spacing:-0.1px">43,75 €</div><div class="t" style="right:176.8px;top:192.14px;font-size:12px;color:#2c3a6e;letter-spacing:-0.1px">68,67 €</div><div class="t" style="right:66.8px;top:192.14px;font-size:12px;color:#2c3a6e;letter-spacing:-0.1px">75,00 €</div><div class="t" style="right:-43.2px;top:192.14px;font-size:12px;color:#2c3a6e;letter-spacing:-0.1px">100,00 €</div><div class="a" style="left:0;top:224.5px;width:776px;height:5.5px;border-radius:3px;background:#0a0a16"></div></div>

<!-- EXPORT -->
<div class="a" style="left:1684px;top:997px;width:166px;height:48px;background:#1874ff;border-radius:24px;box-shadow:0 4px 14px rgba(40,40,70,.16)"></div>
<svg style="left:1704px;top:1013px" width="16" height="16" viewBox="0 0 16 16"><path d="M0.8 2.2 L10 0.6 V15.4 L0.8 13.8 Z" fill="#fff"/><path d="M11 2.4 H14.4 V13.6 H11 Z" fill="#fff" fill-opacity="0.92"/><path d="M3.2 5.4 L7.4 10.6 M7.4 5.4 L3.2 10.6" stroke="#1874ff" stroke-width="1.5"/></svg>
<div class="t" style="left:1726px;top:1016.5px;font-size:11px;font-weight:bold;color:#fff;letter-spacing:0.05px">Exporter vers Excel</div>
</body></html>
